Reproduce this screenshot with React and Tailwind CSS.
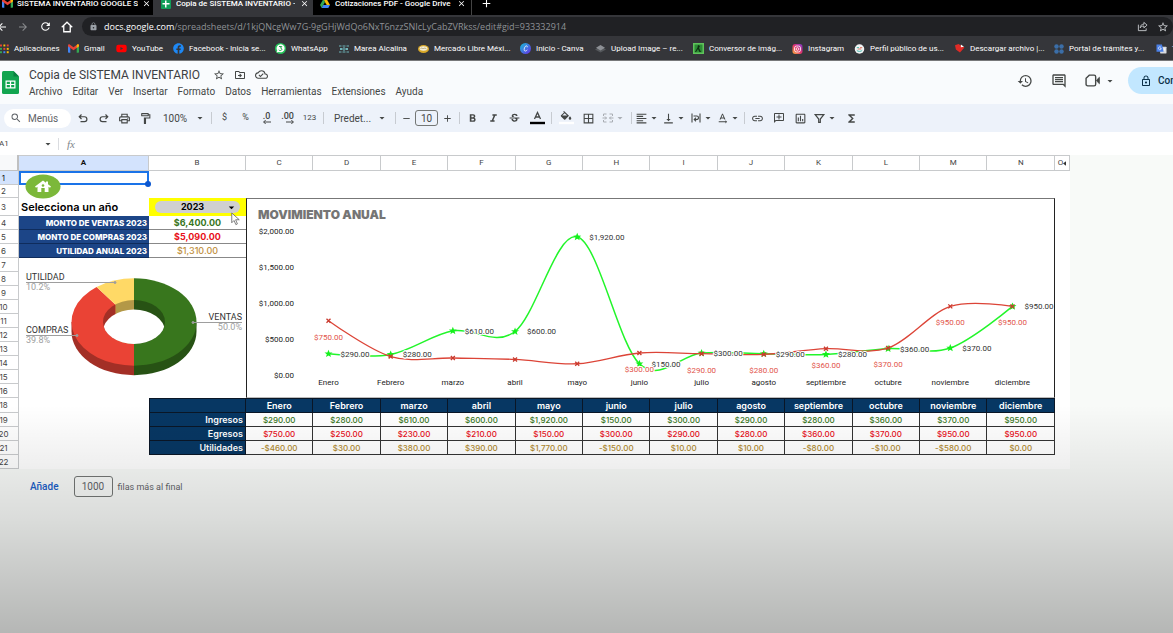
import {
    MdAdd,
    MdArrowBack,
    MdArrowDropDown,
    MdArrowForward,
    MdBorderAll,
    MdClose,
    MdFormatAlignLeft,
    MdFormatBold,
    MdFormatItalic,
    MdFunctions,
    MdHistory,
    MdLink,
    MdLock,
    MdLockOutline,
    MdOutlineAddComment,
    MdOutlineCloudDone,
    MdOutlineDriveFileMove,
    MdOutlineFormatPaint,
    MdOutlineInsertChart,
    MdOutlineInsertComment,
    MdOutlinePrint,
    MdRefresh,
    MdRemove,
    MdSearch,
    MdStarBorder,
    MdStrikethroughS,
    MdTextRotationNone,
    MdVerticalAlignBottom,
} from "react-icons/md";
import { FaFacebook, FaYoutube } from "react-icons/fa";

/* ---------- Small logos ---------- */

const GmailLogo = () => (
    <svg viewBox="0 0 24 18" className="h-[9px] w-[11px] shrink-0">
        <path d="M0 2v14.5A1.5 1.5 0 0 0 1.500 18H5V7z" fill="#4285f4" />
        <path d="M24 2v14.500A1.500 1.500 0 0 1 22.500 18H19V7z" fill="#34a853" />
        <path d="M0 2.500C0 0 2.500-.8 4.300.7L12 6.500 19.700.7C21.500-.8 24 0 24 2.500V4l-12 9L0 4z" fill="#ea4335" />
        <path d="M19 1.200 19.700.7C21.500-.8 24 0 24 2.500V4l-5 3.700z" fill="#fbbc04" />
    </svg>
);

const SheetsTabLogo = () => (
    <svg viewBox="0 0 20 20" className="h-[10px] w-[10px] shrink-0">
        <rect width="20" height="20" rx="2" fill="#0f9d58" />
        <path d="M8 3h3v5h6v3h-6v6H8v-6H3V8h5z" fill="#fff" />
    </svg>
);

const DriveLogo = () => (
    <svg viewBox="0 0 24 21" className="h-[9px] w-[10px] shrink-0">
        <path d="M8 0h8l8 14h-8z" fill="#fbbc04" />
        <path d="M8 0 0 14l4 7 8-14z" fill="#34a853" />
        <path d="M4 21h16l4-7H8z" fill="#4285f4" />
    </svg>
);

const AppsLogo = () => (
    <svg viewBox="0 0 12 12" className="h-[10px] w-[9px] shrink-0">
        {["#ea4335", "#fbbc04", "#ea4335", "#34a853", "#ea4335", "#fbbc04", "#34a853", "#4285f4", "#fbbc04"].map((fill, i) => (
            <rect key={i} x={(i % 3) * 4.5} y={Math.floor(i / 3) * 4.5} width="2.600" height="2.600" fill={fill} />
        ))}
    </svg>
);

const WhatsAppLogo = () => (
    <svg viewBox="0 0 22 22" className="h-[11px] w-[11px] shrink-0">
        <circle cx="11" cy="11" r="11" fill="#25c45a" />
        <path d="M3 19l1.500-4A8 8 0 1 1 8 18z" fill="#fff" />
        <path d="M8 7h5.500l-2.500 3.200c4 0 3.500 5-.5 4.800-1.300 0-2.300-.4-3-1.200" fill="none" stroke="#25a04d" strokeWidth="2" />
    </svg>
);

const MareaLogo = () => (
    <svg viewBox="0 0 20 16" className="h-[8px] w-[10px] shrink-0" fill="none" stroke="#6fb3b8" strokeWidth="2">
        <path d="M0 2h5M7 2h6M15 2h5M0 14h5M7 14h6M15 14h5M2 6l4 4M18 6l-4 4M2 10l4-4M18 10l-4-4" />
        <circle cx="10" cy="8" r="2.500" />
    </svg>
);

const MercadoLogo = () => (
    <svg viewBox="0 0 22 16" className="h-[8px] w-[11px] shrink-0">
        <ellipse cx="11" cy="8" rx="11" ry="8" fill="#d9a827" />
        <ellipse cx="11" cy="7" rx="8" ry="4.500" fill="#f5efd9" />
        <path d="M5 7c3-2 4 1 6 0s4-1 6 1" fill="none" stroke="#8a7a4a" strokeWidth="1.200" />
    </svg>
);

const CanvaLogo = () => (
    <svg viewBox="0 0 22 22" className="h-[11px] w-[11px] shrink-0">
        <defs>
            <linearGradient id="canva" x1="0" y1="0" x2="1" y2="1">
                <stop offset="0" stopColor="#16c0d6" />
                <stop offset="1" stopColor="#6a2be8" />
            </linearGradient>
        </defs>
        <circle cx="11" cy="11" r="11" fill="url(#canva)" />
        <path d="M14.500 8.500c.8-3-2-3.800-4-1.500-2.600 3-3.200 9 0 9.200 1.700 0 3.200-1.200 4-2.700" fill="none" stroke="#fff" strokeWidth="1.600" />
    </svg>
);

const LayersLogo = () => (
    <svg viewBox="0 0 22 16" className="h-[8px] w-[11px] shrink-0">
        <path d="m11 3 11 6-11 6L0 9z" fill="#55585c" />
        <path d="m11 0 9 5.500-9 5.500-9-5.500z" fill="#8d9095" />
    </svg>
);

const ConverterLogo = () => (
    <svg viewBox="0 0 22 22" className="h-[11px] w-[11px] shrink-0">
        <rect width="22" height="22" fill="#5fc35b" />
        <rect x="3" y="3" width="16" height="16" fill="#2c8c35" />
        <path d="m10 4 4 2-2 4 4 8h-3l-3-6-4 6H4l5-9z" fill="#0f2f12" />
    </svg>
);

const InstagramLogo = () => (
    <svg viewBox="0 0 22 22" className="h-[10px] w-[11px] shrink-0">
        <defs>
            <linearGradient id="insta" x1="0" y1="1" x2="1" y2="0">
                <stop offset="0" stopColor="#fdb53c" />
                <stop offset=".5" stopColor="#e1306c" />
                <stop offset="1" stopColor="#7a3bd0" />
            </linearGradient>
        </defs>
        <rect width="22" height="22" rx="6" fill="url(#insta)" />
        <rect x="4.500" y="4.500" width="13" height="13" rx="4" fill="none" stroke="#fff" strokeWidth="1.800" />
        <circle cx="11" cy="11" r="3" fill="none" stroke="#fff" strokeWidth="1.800" />
    </svg>
);

const ProfileLogo = () => (
    <svg viewBox="0 0 22 22" className="h-[10px] w-[11px] shrink-0">
        <circle cx="11" cy="11" r="10.500" fill="#f1f3f4" />
        <path d="M5 8h5M5 14c2 3 10 3 12 0" fill="none" stroke="#37b1a5" strokeWidth="2" />
        <path d="M12 8h5M7 11h8" fill="none" stroke="#d76a55" strokeWidth="2" />
    </svg>
);

const RedLogo = () => (
    <svg viewBox="0 0 22 20" className="h-[9px] w-[11px] shrink-0">
        <path d="m1 3 8-3 4 3 9 5-10 11L3 12z" fill="#e02b26" />
        <path d="m14 1 7 5-7 1z" fill="#fff" />
    </svg>
);

const PortalLogo = () => (
    <svg viewBox="0 0 20 20" className="h-[10px] w-[10px] shrink-0" fill="#3b6ea8">
        <circle cx="5" cy="5" r="4.500" />
        <circle cx="15" cy="5" r="4.500" />
        <circle cx="5" cy="15" r="4.500" />
        <circle cx="15" cy="15" r="4.500" />
    </svg>
);

const TranslateLogo = () => (
    <svg viewBox="0 0 22 22" className="h-[10px] w-[11px] shrink-0">
        <rect x="8" y="6" width="14" height="15" rx="1" fill="#d8dade" />
        <path d="M0 1h12l4 16H0z" fill="#4a80e8" />
        <path d="M10 7.500a3.200 3.200 0 1 0 .6 2.500H8M15 11h5M17.500 10c0 4-1 5-2 6" fill="none" stroke="#fff" strokeWidth="1.500" />
    </svg>
);

const SheetsLogo = () => (
    <svg viewBox="0 0 34 46" className="h-[23px] w-[17px] shrink-0">
        <path d="M3 0h20l11 11v32a3 3 0 0 1-3 3H3a3 3 0 0 1-3-3V3a3 3 0 0 1 3-3z" fill="#12a550" />
        <path d="M23 0l11 11H23z" fill="#0b8040" />
        <path d="M7 19h20v16H7zM9.500 21.500v4.300h6.300v-4.300zm8.800 0v4.300h6.200v-4.300zM9.500 28.200v4.300h6.300v-4.300zm8.800 0v4.300h6.200v-4.300z" fill="#fff" fillRule="evenodd" />
    </svg>
);

/* ---------- Browser chrome ---------- */

const bookmarks = [
    { label: "Aplicaciones", logo: <AppsLogo />, width: "w-[68px]" },
    { label: "Gmail", logo: <GmailLogo />, width: "w-[48px]" },
    { label: "YouTube", logo: <FaYoutube className="h-[11px] w-[11px] shrink-0 text-[#f00]" />, width: "w-[57px]" },
    { label: "Facebook - Inicia se...", logo: <FaFacebook className="h-[11px] w-[11px] shrink-0 text-[#1e88f5]" />, width: "w-[102px]" },
    { label: "WhatsApp", logo: <WhatsAppLogo />, width: "w-[64px]" },
    { label: "Marea Alcalina", logo: <MareaLogo />, width: "w-[79px]" },
    { label: "Mercado Libre Méxi...", logo: <MercadoLogo />, width: "w-[102px]" },
    { label: "Inicio - Canva", logo: <CanvaLogo />, width: "w-[75px]" },
    { label: "Upload Image – re...", logo: <LayersLogo />, width: "w-[98px]" },
    { label: "Conversor de imág...", logo: <ConverterLogo />, width: "w-[99px]" },
    { label: "Instagram", logo: <InstagramLogo />, width: "w-[62px]" },
    { label: "Perfil público de us...", logo: <ProfileLogo />, width: "w-[100px]" },
    { label: "Descargar archivo |...", logo: <RedLogo />, width: "w-[100px]" },
    { label: "Portal de trámites y...", logo: <PortalLogo />, width: "w-[102px]" },
    { label: "T", logo: <TranslateLogo />, width: "w-[60px]" },
];

const BrowserChrome = () => (
    <header className="overflow-hidden border-b border-[#77787a] bg-[#35363a] font-['Roboto',sans-serif] text-white">
        <div className="flex h-[15px] items-end overflow-hidden bg-black text-[8px] leading-[10px] font-medium">
            <div className="flex h-[23px] w-[153px] items-center gap-1 pl-[2px]">
                <GmailLogo />
                <span className="w-[121px] overflow-hidden whitespace-nowrap">SISTEMA INVENTARIO GOOGLE S</span>
                <button aria-label="Cerrar pestaña"><MdClose className="h-[9px] w-[9px]" /></button>
            </div>
            <div className="flex h-[23px] w-[160px] items-center gap-[5px] bg-[#35363a] pl-2">
                <SheetsTabLogo />
                <span className="w-[119px] overflow-hidden whitespace-nowrap">Copia de SISTEMA INVENTARIO -</span>
                <button aria-label="Cerrar pestaña"><MdClose className="h-[9px] w-[9px]" /></button>
            </div>
            <div className="flex h-[23px] w-[159px] items-center gap-[5px] border-r border-[#444] pl-[7px]">
                <DriveLogo />
                <span className="w-[117px] overflow-hidden whitespace-nowrap">Cotizaciones PDF - Google Drive</span>
                <button aria-label="Cerrar pestaña"><MdClose className="h-[9px] w-[9px]" /></button>
            </div>
            <button aria-label="Nueva pestaña" className="flex h-[23px] items-center pl-2">
                <MdAdd className="h-[13px] w-[13px]" />
            </button>
        </div>

        <div className="flex h-[23px] items-center">
            <div className="flex w-[82px] shrink-0 items-center justify-between pr-[9px]">
                <button aria-label="Atrás" className="-ml-1"><MdArrowBack className="h-3 w-3" /></button>
                <button aria-label="Adelante"><MdArrowForward className="h-3 w-3 text-[#8a8b8e]" /></button>
                <button aria-label="Recargar"><MdRefresh className="h-[13px] w-[13px]" /></button>
                <button aria-label="Inicio">
                    <svg viewBox="0 0 24 24" className="h-3 w-3" fill="none" stroke="currentColor" strokeWidth="2.600">
                        <path d="M1.500 12.500 12 2.500l10.500 10M5.500 10v11.500h13V10" />
                    </svg>
                </button>
            </div>
            <div className="flex h-[19px] grow items-center rounded-full bg-[#202124] pr-1 pl-[7px]">
                <MdLock className="h-[9px] w-[9px] text-[#9aa0a6]" />
                <p className="grow pl-[6px] font-['Open_Sans',sans-serif] text-[9px] leading-3 text-[#8f9296]">
                    <span className="text-white">docs.google.com</span>/spreadsheets/d/1kjQNcgWw7G-9gGHjWdQo6NxT6nzzSNIcLyCabZVRkss/edit#gid=933332914
                </p>
                <button aria-label="Compartir página" className="mr-[9px]">
                    <svg viewBox="0 0 24 24" className="h-[11px] w-[11px]" fill="none" stroke="#c4c7ca" strokeWidth="2">
                        <path d="M3 8v13h17v-5M15 3l7 6-7 6v-4c-4 0-6 1-8 4 0-5 3-8 8-8z" />
                    </svg>
                </button>
                <button aria-label="Añadir a marcadores"><MdStarBorder className="h-3 w-3 text-[#c4c7ca]" /></button>
            </div>
        </div>

        <nav className="flex h-[22px] items-center pb-px text-[8px] leading-3">
            {bookmarks.map((bookmark) => (
                <a key={bookmark.label} href="#" className={`flex shrink-0 items-center gap-[5px] overflow-hidden whitespace-nowrap ${bookmark.width}`}>
                    {bookmark.logo}
                    {bookmark.label}
                </a>
            ))}
        </nav>
    </header>
);

/* ---------- Sheets header ---------- */

const menus = ["Archivo", "Editar", "Ver", "Insertar", "Formato", "Datos", "Herramientas", "Extensiones", "Ayuda"];

const TitleBar = () => (
    <div className="flex h-[43px] items-center overflow-hidden bg-[#f9fbfd] text-[#444746]">
        <div className="pl-[2px]"><SheetsLogo /></div>
        <div className="flex grow flex-col gap-[2px] pl-[10px]">
            <div className="flex items-center gap-[9px]">
                <h1 className="pr-1 text-[12px] leading-4 text-[#3c4043]">Copia de SISTEMA INVENTARIO</h1>
                <button aria-label="Destacar"><MdStarBorder className="h-3 w-3" /></button>
                <button aria-label="Mover"><MdOutlineDriveFileMove className="h-3 w-3" /></button>
                <button aria-label="Estado del documento"><MdOutlineCloudDone className="h-[13px] w-[13px]" /></button>
            </div>
            <nav className="flex gap-[10px] text-[10px] leading-[14px]">
                {menus.map((menu) => (
                    <button key={menu}>{menu}</button>
                ))}
            </nav>
        </div>
        <div className="flex items-center gap-[18px] pb-1">
            <button aria-label="Historial"><MdHistory className="h-4 w-4" /></button>
            <button aria-label="Comentarios"><MdOutlineInsertComment className="h-4 w-4" /></button>
            <button aria-label="Videollamada" className="flex items-center gap-[3px]">
                <svg viewBox="0 0 30 24" className="h-[13px] w-[16px]" fill="none" stroke="currentColor" strokeWidth="2.600">
                    <path d="M8 2h9a3 3 0 0 1 3 3v14a3 3 0 0 1-3 3H5a3 3 0 0 1-3-3V8z" />
                    <path d="m22 11 5-5v12l-5-5z" fill="currentColor" strokeWidth="1.500" />
                </svg>
                <MdArrowDropDown className="h-3 w-3" />
            </button>
        </div>
        <div className="pb-1 pl-3">
            <button className="flex h-[27px] w-[45px] items-center gap-[6px] overflow-hidden rounded-l-full bg-[#c2e7ff] pl-3 text-[10px] font-medium whitespace-nowrap text-[#0b3048]">
                <MdLockOutline className="h-3 w-3 shrink-0" />
                Compartir
            </button>
        </div>
    </div>
);

const Separator = () => <span className="mx-[2px] h-3 w-px shrink-0 bg-[#c7cbd1]" />;

const Tool = ({ label, icon: Icon, caret, muted, width = "w-[21px]", children }) => (
    <button
        aria-label={label}
        className={`flex h-5 shrink-0 items-center justify-center ${width} ${muted ? "text-[#a9adb3]" : ""}`}
    >
        {Icon ? <Icon className="h-[13px] w-[13px] shrink-0" /> : children}
        {caret && <MdArrowDropDown className="h-3 w-3 shrink-0" />}
    </button>
);

const Decimals = ({ digits, arrow }) => (
    <span className="flex flex-col items-center text-[9px] leading-[7px] font-medium">
        {digits}
        <svg viewBox="0 0 12 6" className="h-1 w-2 self-end" fill="none" stroke="currentColor" strokeWidth="1.500">
            <path d={arrow} />
        </svg>
    </span>
);

const Toolbar = () => (
    <div className="flex h-[28px] items-center overflow-hidden bg-[#edf2fa] pl-1 text-[10px] text-[#444746]">
        <button className="mr-px flex h-[19px] w-[67px] shrink-0 items-center gap-[6px] rounded-full bg-white pl-[6px] text-[#5f6368]">
            <MdSearch className="h-3 w-3" />
            Menús
        </button>
        <Tool label="Deshacer">
            <svg viewBox="0 0 24 24" className="h-3 w-3" fill="none" stroke="currentColor" strokeWidth="2.400">
                <path d="M9 5 4.500 9.500 9 14M5 9.500h10a4.800 4.800 0 0 1 0 9.600H7" />
            </svg>
        </Tool>
        <Tool label="Rehacer">
            <svg viewBox="0 0 24 24" className="h-3 w-3" fill="none" stroke="currentColor" strokeWidth="2.400">
                <path d="m15 5 4.500 4.500L15 14M19 9.500H9a4.800 4.800 0 0 0 0 9.600h8" />
            </svg>
        </Tool>
        <Tool label="Imprimir" icon={MdOutlinePrint} />
        <Tool label="Copiar formato" icon={MdOutlineFormatPaint} />
        <button className="flex w-[53px] shrink-0 items-center justify-between pr-[3px] pl-[7px]">
            100% <MdArrowDropDown className="h-3 w-3" />
        </button>
        <Separator />
        <Tool label="Moneda"><span className="text-[9px]">$</span></Tool>
        <Tool label="Porcentaje"><span className="text-[9px]">%</span></Tool>
        <Tool label="Menos decimales"><Decimals digits=".0" arrow="M12 3H1M4 0L1 3l3 3" /></Tool>
        <Tool label="Más decimales"><Decimals digits=".00" arrow="M0 3h11M8 0l3 3-3 3" /></Tool>
        <Tool label="Más formatos" width="w-[23px]"><span className="text-[8px]">123</span></Tool>
        <Separator />
        <button className="flex w-[67px] shrink-0 items-center justify-between pr-[5px] pl-2">
            Predet... <MdArrowDropDown className="h-3 w-3" />
        </button>
        <Separator />
        <button aria-label="Reducir tamaño" className="px-[3px]"><MdRemove className="h-[11px] w-[11px]" /></button>
        <input aria-label="Tamaño de fuente" defaultValue="10" className="h-4 w-[23px] shrink-0 rounded-[3px] border border-[#747775] text-center" />
        <button aria-label="Aumentar tamaño" className="px-[4px]"><MdAdd className="h-[11px] w-[11px]" /></button>
        <Separator />
        <Tool label="Negrita" icon={MdFormatBold} />
        <Tool label="Cursiva" icon={MdFormatItalic} />
        <Tool label="Tachado" icon={MdStrikethroughS} />
        <Tool label="Color de texto" width="w-[24px]">
            <svg viewBox="0 0 15 14" className="h-[14px] w-[15px]" fill="none" stroke="currentColor" strokeWidth="1.300">
                <path d="M4.500 8 7.500 1.500 10.500 8M5.500 6h4" />
                <path d="M0 12h15" stroke="#000" strokeWidth="2.400" />
            </svg>
        </Tool>
        <Separator />
        <Tool label="Color de relleno" width="w-[24px]">
            <svg viewBox="0 0 15 14" className="h-[14px] w-[15px]">
                <path d="M5 0l5 4.800-3.700 3.600a1 1 0 0 1-1.200 0L2 5.400a1 1 0 0 1 0-1.200L5 1.500 4.200.7zM3.200 4.600h4.900L5.700 2.300z" fill="#444746" fillRule="evenodd" />
                <path d="M11 5.300s1.300 1.300 1.300 2.100a1.300 1.300 0 0 1-2.600 0c0-.8 1.300-2.100 1.300-2.100z" fill="#444746" />
                <path d="M0 12h15" stroke="#fff" strokeWidth="2.400" />
            </svg>
        </Tool>
        <Tool label="Bordes" icon={MdBorderAll} />
        <Tool label="Combinar celdas" width="w-[30px]" caret muted>
            <svg viewBox="0 0 24 24" className="h-3 w-3 shrink-0" fill="none" stroke="currentColor" strokeWidth="2">
                <path d="M9 4H3v4M15 4h6v4M9 20H3v-4M15 20h6v-4M1 12h8M23 12h-8M6 9l3 3-3 3M18 9l-3 3 3 3" />
            </svg>
        </Tool>
        <Separator />
        <Tool label="Alineación horizontal" icon={MdFormatAlignLeft} width="w-[27px]" caret />
        <Tool label="Alineación vertical" icon={MdVerticalAlignBottom} width="w-[27px]" caret />
        <Tool label="Ajuste de texto" width="w-[27px]" caret>
            <svg viewBox="0 0 24 24" className="h-3 w-3 shrink-0" fill="none" stroke="currentColor" strokeWidth="2.200">
                <path d="M4 3v18M20 3v18M7 8h6.500a3.500 3.500 0 0 1 0 7H9M12 11.500 8.500 15l3.500 3.500" />
            </svg>
        </Tool>
        <Tool label="Rotación de texto" icon={MdTextRotationNone} width="w-[27px]" caret />
        <Separator />
        <Tool label="Insertar enlace" icon={MdLink} />
        <Tool label="Insertar comentario">
            <MdOutlineAddComment className="h-3 w-3 -scale-x-100" />
        </Tool>
        <Tool label="Insertar gráfico" icon={MdOutlineInsertChart} width="w-[23px]" />
        <Tool label="Crear filtro" width="w-[27px]" caret>
            <svg viewBox="0 0 24 24" className="h-[13px] w-[13px] shrink-0" fill="none" stroke="currentColor" strokeWidth="2.200">
                <path d="M4 5h16l-6.500 8v6h-3v-6z" />
            </svg>
        </Tool>
        <Tool label="Funciones" icon={MdFunctions} width="w-[24px]" />
    </div>
);

const FormulaBar = () => (
    <div className="flex h-[23px] items-center overflow-hidden bg-white pt-px text-[8px] text-[#444746]">
        <label className="flex w-[59px] items-center border-r border-[#dadce0]">
            <input aria-label="Cuadro de nombres" defaultValue="A1" className="-ml-px w-[43px] leading-[10px]" />
            <MdArrowDropDown className="h-3 w-3 shrink-0" />
        </label>
        <label htmlFor="formula" className="w-6 text-center font-['Liberation_Serif',serif] text-[11px] leading-3 text-[#80868b] italic">fx</label>
        <input id="formula" className="grow" />
    </div>
);

/* ---------- Charts ---------- */

const months = ["Enero", "Febrero", "marzo", "abril", "mayo", "junio", "julio", "agosto", "septiembre", "octubre", "noviembre", "diciembre"];
const income = [290, 280, 610, 600, 1920, 150, 300, 290, 280, 360, 370, 950];
const expenses = [750, 250, 230, 210, 150, 300, 290, 280, 360, 370, 950, 950];

const money = (value) =>
    `${value < 0 ? "-" : ""}$${Math.abs(value).toLocaleString("en-US", { minimumFractionDigits: 2 })}`;

const px = (i) => 81.5 + i * 62.18;
const py = (value) => 175.5 - value * 0.0717;

const smoothPath = (values) => {
    const points = values.map((value, i) => [px(i), py(value)]);
    let d = `M${points[0]}`;
    for (let i = 0; i < points.length - 1; i++) {
        const [p0, p1, p2, p3] = [points[i - 1], points[i], points[i + 1], points[i + 2]];
        const c1 = p0 ? [p1[0] + (p2[0] - p0[0]) / 6, p1[1] + (p2[1] - p0[1]) / 6] : p1;
        const c2 = p3 ? [p2[0] - (p3[0] - p1[0]) / 6, p2[1] - (p3[1] - p1[1]) / 6] : p2;
        d += `C${c1} ${c2} ${p2}`;
    }
    return d;
};

const LineChart = () => (
    <svg viewBox="0 0 807 197" className="block h-[197px] w-full font-['Roboto',sans-serif] text-[8px]">
        <text x="11" y="20" fill="#757575" className="font-['Inter',sans-serif] text-[12px] font-black">MOVIMIENTO ANUAL</text>
        {[2000, 1500, 1000, 500, 0].map((tick) => (
            <text key={tick} x="47" y={py(tick) + 3} textAnchor="end" fill="#222">{money(tick)}</text>
        ))}
        {months.map((month, i) => (
            <text key={month} x={px(i)} y="186" textAnchor="middle" fill="#222">{month}</text>
        ))}

        <path d={smoothPath(income)} fill="none" stroke="#22f52a" strokeWidth="1.500" />
        {income.map((value, i) => (
            <path
                key={i}
                transform={`translate(${px(i)} ${py(value)})`}
                d="M0-4 1.100-1.300 4-1.200 1.700.6 2.500 3.400 0 1.800-2.500 3.400-1.700.6-4-1.200-1.100-1.300z"
                fill="#14f01c"
            />
        ))}
        <path d={smoothPath(expenses)} fill="none" stroke="#dc4437" strokeWidth="1.300" />
        {expenses.map((value, i) => (
            <path
                key={i}
                transform={`translate(${px(i)} ${py(value)})`}
                d="M-2-2 2 2M2-2-2 2"
                fill="none"
                stroke="#c93a2e"
                strokeWidth="1.300"
            />
        ))}

        {/* Value labels */}
        {income.map((value, i) => (
            <text key={i} x={px(i) + 12} y={py(value) + 3} fill="#333" stroke="#fff" strokeWidth="2" paintOrder="stroke">
                {money(value)}
            </text>
        ))}
        {expenses.map((value, i) => (i === 0 || i > 4) && (
            <text key={i} x={px(i)} y={py(value) + 19} textAnchor="middle" fill="#e2544a" stroke="#fff" strokeWidth="2" paintOrder="stroke">
                {money(value)}
            </text>
        ))}
    </svg>
);

const DonutChart = () => (
    <svg viewBox="0 0 227 139" className="block h-[139px] w-full font-['Roboto',sans-serif] text-[9px]">
        <defs>
            <clipPath id="hole">
                <ellipse cx="115" cy="64" rx="31" ry="22" />
            </clipPath>
        </defs>
        {/* Outer wall */}
        <path d="M52.500 64v9.500A62.500 43.700 0 0 0 115 117.200V64z" fill="#a32f26" />
        <path d="M177.500 64v9.500A62.500 43.700 0 0 1 115 117.200V64z" fill="#275214" />
        {/* Top faces */}
        <path d="M115 20.300A62.500 43.700 0 0 1 115 107.700V64z" fill="#38761d" />
        <path d="M115 107.700A62.500 43.700 0 0 1 77.600 29L115 64z" fill="#ea4335" />
        <path d="M77.600 29A62.500 43.700 0 0 1 115 20.300V64z" fill="#ffd966" />
        {/* Inner wall */}
        <g clipPath="url(#hole)">
            <path d="M84 42h12.500v44H84z" fill="#a32f26" />
            <path d="M96.500 42H115v44H96.500z" fill="#b39847" />
            <path d="M115 42h31v44h-31z" fill="#275214" />
            <ellipse cx="115" cy="73.500" rx="31" ry="22" fill="#fff" />
        </g>

        <g stroke="#9e9e9e" strokeWidth="1" fill="#9e9e9e">
            <path d="M7 24.500h89M7 77.500h51M223 64.500h-49" />
            <circle cx="96" cy="24.500" r="1" />
            <circle cx="58" cy="77.500" r="1" />
            <circle cx="174" cy="64.500" r="1" />
        </g>
        <text x="7" y="22" fill="#333">UTILIDAD</text>
        <text x="7" y="32" fill="#9e9e9e">10.2%</text>
        <text x="7" y="75" fill="#333">COMPRAS</text>
        <text x="7" y="85" fill="#9e9e9e">39.8%</text>
        <text x="223" y="62" textAnchor="end" fill="#333">VENTAS</text>
        <text x="223" y="72" textAnchor="end" fill="#9e9e9e">50.0%</text>
    </svg>
);

/* ---------- Spreadsheet ---------- */

const columns = ["A", "B", "C", "D", "E", "F", "G", "H", "I", "J", "K", "L", "M", "N"];

const totals = [
    { row: 4, label: "MONTO DE VENTAS 2023", value: "$6,400.00", color: "font-bold text-[#38761d]" },
    { row: 5, label: "MONTO DE COMPRAS 2023", value: "$5,090.00", color: "font-bold text-[#e8101a]" },
    { row: 6, label: "UTILIDAD ANUAL 2023", value: "$1,310.00", color: "font-medium text-[#bf9040]" },
];

const summary = [
    { row: 19, label: "Ingresos", values: income, color: "text-[#38761d]" },
    { row: 20, label: "Egresos", values: expenses, color: "text-[#e8101a]" },
    { row: 21, label: "Utilidades", values: income.map((value, i) => value - expenses[i]), color: "text-[#b08a30]" },
];

const RowHeader = ({ n, selected }) => (
    <th className={`border-r border-b border-[#c8cacc] pr-[11px] text-center text-[8px] leading-[10px] font-normal ${selected ? "bg-[#d3e3fd] text-[#111]" : "text-[#444]"}`}>
        <span className="flex justify-center">{n}</span>
    </th>
);

const Sheet = () => (
    <table className="w-full table-fixed border-separate border-spacing-0 bg-white font-['Inter',sans-serif] text-[9px] leading-3">
        <colgroup>
            <col className="w-[19px]" />
            <col className="w-[130px]" />
            <col className="w-[97px]" />
            {months.map((month) => <col key={month} />)}
            <col className="w-[15px]" />
        </colgroup>
        <thead>
            <tr className="h-4 font-['Roboto',sans-serif] text-[8px] leading-[10px] text-[#444]">
                <th className="border-r-2 border-b border-[#c0c0c0] bg-[#f8f9fa]" />
                {columns.map((column) => (
                    <th
                        key={column}
                        className={`border-t border-r border-b border-[#c8cacc] ${column === "A" ? "bg-[#d3e3fd] font-bold text-[#111]" : "font-normal"}`}
                    >
                        {column}
                    </th>
                ))}
                <th className="border-t border-r border-b border-[#c8cacc] font-normal">
                    <span className="flex items-center justify-center">
                        O
                        <svg viewBox="0 0 4 6" className="h-[5px] w-[3px]" fill="#333">
                            <path d="M4 0v6L0 3z" />
                        </svg>
                    </span>
                </th>
            </tr>
        </thead>
        <tbody>
            <tr className="h-[14px]">
                <RowHeader n={1} selected />
                <td className="relative border-2 border-[#1a73e8]">
                    <span className="absolute -right-[4px] -bottom-[4px] h-[6px] w-[6px] rounded-full bg-[#0b57d0]" />
                    <button aria-label="Inicio" className="absolute top-px left-1 z-10">
                        <svg viewBox="0 0 36 25" className="h-[25px] w-[36px]">
                            <ellipse cx="18" cy="12.500" rx="17.500" ry="12" fill="#7cb83a" />
                            <path d="M18 6.500 10 12.500l1 1.300 1.500-1V18h3.800v-4h3.400v4h3.800v-5.200l1.500 1 1-1.300-3-2.300V7.500h-2v1.300z" fill="#fff" />
                            <circle cx="18" cy="11.500" r="1.300" fill="#7cb83a" />
                        </svg>
                    </button>
                </td>
                <td colSpan={14} />
            </tr>
            <tr className="h-[13px]">
                <RowHeader n={2} />
                <td colSpan={15} />
            </tr>
            <tr className="h-[18px]">
                <RowHeader n={3} />
                <td className="pl-[2px] text-[11px] leading-[14px] font-semibold text-black">
                    <label htmlFor="year">Selecciona un año</label>
                </td>
                <td className="bg-[#ff0] px-[6px]">
                    <div className="relative rounded-full bg-[#d0d0d0]">
                        <select id="year" defaultValue="2023" className="block h-3 w-full appearance-none pr-[10px] text-center text-[9px] leading-3 font-bold text-black">
                            <option>2023</option>
                        </select>
                        <MdArrowDropDown className="pointer-events-none absolute top-0 right-[2px] h-[13px] w-[13px] text-black" />
                        <svg viewBox="0 0 12 18" className="absolute top-[11px] right-0 z-10 h-[14px] w-[9px]">
                            <path d="M1 1v13l3-3 2.500 5.500 2-1L6.200 10H11z" fill="#fff" stroke="#555" strokeWidth="1" />
                        </svg>
                    </div>
                </td>
                <td colSpan={12} rowSpan={14} className="border border-x-[#222] border-t-[#777] border-b-[#bbb] bg-white align-top">
                    <LineChart />
                </td>
                <td />
            </tr>
            {totals.map((total) => (
                <tr key={total.row} className="h-[14px]">
                    <RowHeader n={total.row} />
                    <td className="border-b border-[#0f2c5c] bg-[#1c4587] pr-[2px] text-right text-[8px] font-extrabold text-white">{total.label}</td>
                    <td className={`border-b border-[#888] text-center ${total.color}`}>{total.value}</td>
                    <td />
                </tr>
            ))}
            <tr className="h-[14px]">
                <RowHeader n={7} />
                <td colSpan={2} rowSpan={10} className="align-top">
                    <DonutChart />
                </td>
                <td />
            </tr>
            {[8, 9, 10, 11, 12, 13, 14, 15, 16].map((n) => (
                <tr key={n} className="h-[14px]">
                    <RowHeader n={n} />
                    <td />
                </tr>
            ))}
            <tr className="h-[15px] text-white">
                <RowHeader n={18} />
                <td />
                <td className="border border-[#0a1626] bg-[#073763]" />
                {months.map((month) => (
                    <th key={month} className="border-t border-r border-b border-[#0a1626] bg-[#073763] font-semibold">{month}</th>
                ))}
                <td />
            </tr>
            {summary.map((line) => (
                <tr key={line.row} className="h-[14px]">
                    <RowHeader n={line.row} />
                    <td />
                    <th className="border-x border-b border-[#0a1626] bg-[#073763] pr-[2px] text-right font-semibold text-white">{line.label}</th>
                    {line.values.map((value, i) => (
                        <td key={i} className={`border-r border-b border-[#333] text-center text-[8px] font-medium ${line.color}`}>{money(value)}</td>
                    ))}
                    <td />
                </tr>
            ))}
            <tr className="h-[14px]">
                <RowHeader n={22} />
                <td colSpan={15} />
            </tr>
        </tbody>
    </table>
);

const App = () => {
    return (
        <div className="relative flex min-h-screen flex-col overflow-hidden bg-[#f8faf8] font-['Roboto',sans-serif]">
            <BrowserChrome />
            <TitleBar />
            <Toolbar />
            <FormulaBar />
            <main className="grow pr-[103px]">
                <Sheet />
                <form className="flex items-center gap-[5px] pt-[7px] pl-[30px] text-[9px] text-[#5f6368]">
                    <button type="button" className="mr-[10px] text-[10px] font-medium text-[#1a5fc8]">Añade</button>
                    <input id="rows" defaultValue="1000" className="h-[21px] w-[39px] rounded-[3px] border border-[#747775] text-center text-[10px]" />
                    <label htmlFor="rows" className="pt-[2px]">filas más al final</label>
                </form>
            </main>
            {/* Shade that darkens the bottom of the window */}
            <div className="pointer-events-none absolute inset-x-0 bottom-0 z-20 h-[36%] bg-linear-to-b from-transparent via-black/12 to-black/27" />
        </div>
    );
};

export default App;
